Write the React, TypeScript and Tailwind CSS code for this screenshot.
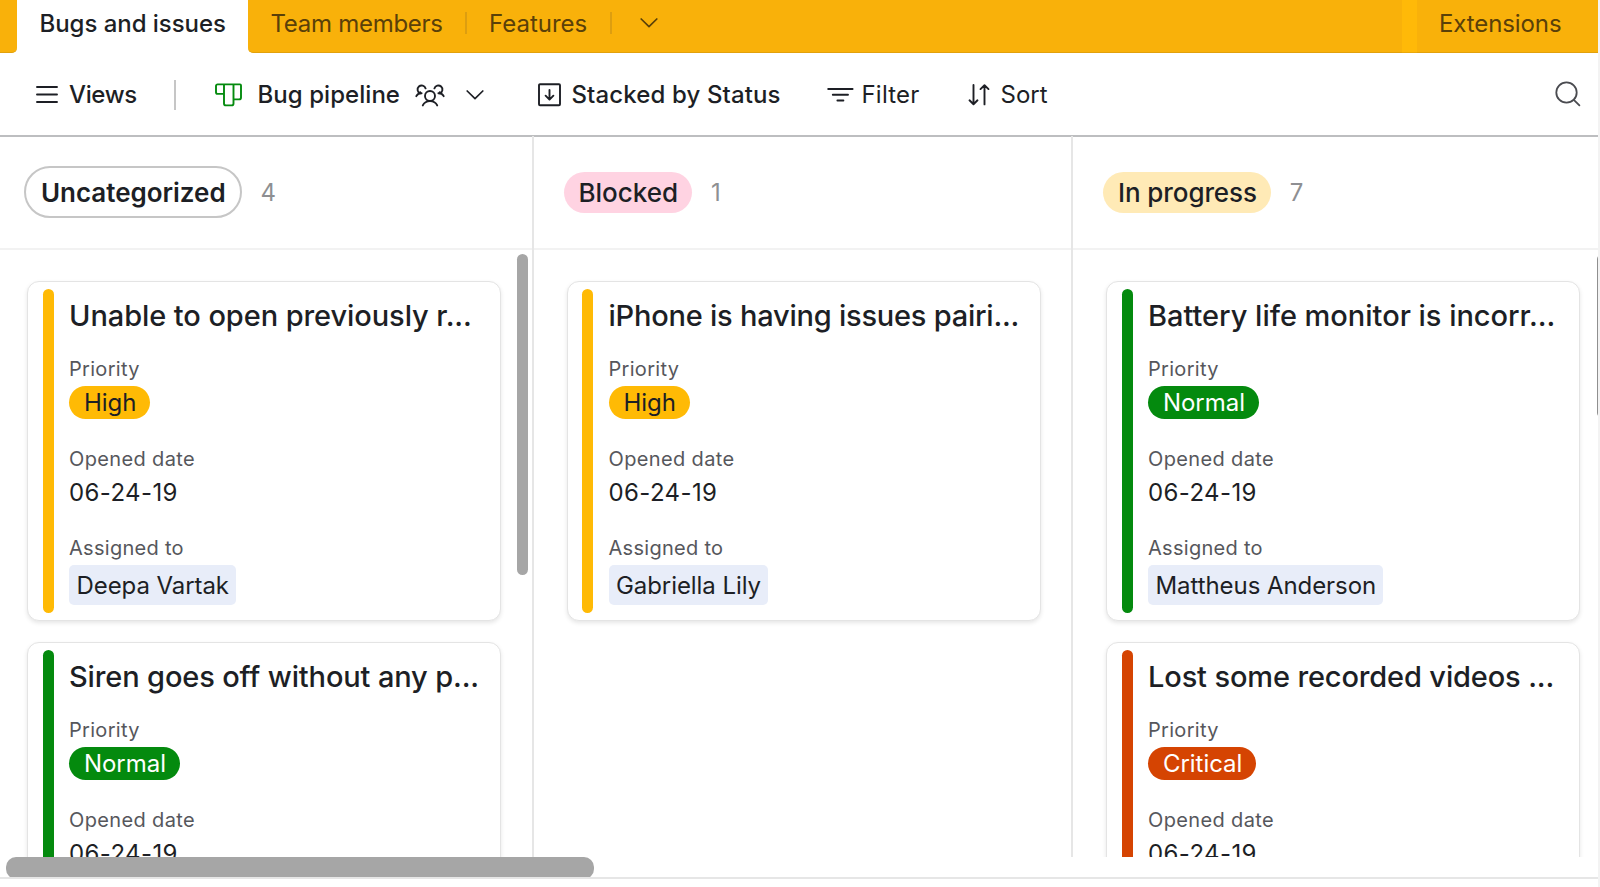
import React from "react";

type Bug = {
  title: string;
  titleTracking: string;
  priority: "High" | "Normal" | "Critical";
  opened: string;
  assignee: string;
};

type Stack = {
  name: string;
  count: number;
  pill: string;
  column: string;
  bugs: Bug[];
};

const PRIORITY = {
  High: { pill: "bg-[#ffba05] text-[#1d1f25]", bar: "bg-[#ffba05]" },
  Normal: { pill: "bg-[#048a0e] text-white", bar: "bg-[#048a0e]" },
  Critical: { pill: "bg-[#d54402] text-white", bar: "bg-[#d54402]" },
};

const STACKS: Stack[] = [
  {
    name: "Uncategorized",
    count: 4,
    pill: "h-[52px] border-2 border-[#c6c6c6] pr-[14px] pl-[15px] font-semibold tracking-[-0.03px]",
    column: "w-[534px] pl-[27px]",
    bugs: [
      { title: "Unable to open previously r...", titleTracking: "tracking-[-0.08px]", priority: "High", opened: "06-24-19", assignee: "Deepa Vartak" },
      { title: "Siren goes off without any p...", titleTracking: "tracking-[-0.14px]", priority: "Normal", opened: "06-24-19", assignee: "Deepa Vartak" },
    ],
  },
  {
    name: "Blocked",
    count: 1,
    pill: "h-[41px] bg-[#ffd3e2] pr-[14px] pl-[15px] font-medium tracking-[-0.03px]",
    column: "w-[539px] pl-[32.5px]",
    bugs: [
      { title: "iPhone is having issues pairi...", titleTracking: "tracking-[-0.23px]", priority: "High", opened: "06-24-19", assignee: "Gabriella Lily" },
    ],
  },
  {
    name: "In progress",
    count: 7,
    pill: "h-[41px] bg-[#ffeab6] pl-[15px] pr-[14px] font-medium tracking-[-0.1px]",
    column: "w-[525px] pl-[33px]",
    bugs: [
      { title: "Battery life monitor is incorr...", titleTracking: "tracking-[-0.02px]", priority: "Normal", opened: "06-24-19", assignee: "Mattheus Anderson" },
      { title: "Lost some recorded videos ...", titleTracking: "tracking-[-0.14px]", priority: "Critical", opened: "06-24-19", assignee: "Mattheus Anderson" },
    ],
  },
];

function ChevronIcon({ className }: { className: string }) {
  return (
    <svg className={className} viewBox="0 0 18 12" fill="none" stroke="currentColor" strokeWidth="1.7" strokeLinecap="round" strokeLinejoin="round">
      <path d="M1.2 2 9 9.600 16.800 2" />
    </svg>
  );
}

function MenuIcon() {
  return (
    <svg className="h-6 w-[22px] shrink-0" viewBox="0 0 22 24" fill="none" stroke="currentColor" strokeWidth="1.9" strokeLinecap="round">
      <path d="M1 4h20M1 11.500h20M1 19h20" />
    </svg>
  );
}

function KanbanIcon() {
  return (
    <svg className="h-6 w-[27px] shrink-0 text-[#048a0e]" viewBox="0 0 27 24" fill="none" stroke="currentColor" strokeWidth="1.9" strokeLinejoin="round">
      <path d="M9 1.400H2.600A1.600 1.600 0 0 0 1 3v6.300a1.600 1.600 0 0 0 1.600 1.600H9M9 1.400v19a2 2 0 0 0 2 2h5.500a2 2 0 0 0 2-2v-19M9 1.400h16a1 1 0 0 1 1 1v12a2 2 0 0 1-2 2h-5.500" />
    </svg>
  );
}

function PeopleIcon() {
  return (
    <svg className="h-6 w-[30px] shrink-0" viewBox="0 0 30 24" fill="none" stroke="currentColor" strokeWidth="1.900" strokeLinecap="round" strokeLinejoin="round">
      <circle cx="15" cy="13" r="5" />
      <path d="M7.800 22.400C9 19.800 11.800 18.100 15 18.100s6 1.700 7.200 4.300" />
      <path d="M10.600 5.400a4.100 4.100 0 1 0-5.400 5M6.600 10.300c-2.500 0-4.400 1.100-5.300 2.900M5.200 9.200v1.300" />
      <path d="M19.400 5.400a4.100 4.100 0 1 1 5.400 5M23.400 10.300c2.500 0 4.400 1.100 5.300 2.900M24.800 9.200v1.300" />
    </svg>
  );
}

function StackIcon() {
  return (
    <svg className="h-6 w-[23px] shrink-0" viewBox="0 0 23 24" fill="none" stroke="currentColor" strokeWidth="1.900" strokeLinecap="round" strokeLinejoin="round">
      <rect x="1" y="1.200" width="21" height="21" rx="1" />
      <path d="M11.500 7v9.400M7.600 12.700l3.900 3.900 3.900-3.900" />
    </svg>
  );
}

function FilterIcon() {
  return (
    <svg className="h-6 w-[27px] shrink-0" viewBox="0 0 27 24" fill="none" stroke="currentColor" strokeWidth="1.900" strokeLinecap="round">
      <path d="M1.200 6h24.400M5.800 11.800h15.200M10.400 17.500h6" />
    </svg>
  );
}

function SortIcon() {
  return (
    <svg className="h-6 w-[22px] shrink-0" viewBox="0 0 22 24" fill="none" stroke="currentColor" strokeWidth="1.900" strokeLinecap="round" strokeLinejoin="round">
      <path d="M5.500 2v19M1.500 17.300l4 3.900 4-3.900M16.500 21.400V2.200M12.500 6.100l4-3.900 4 3.900" />
    </svg>
  );
}

function SearchIcon() {
  return (
    <svg className="h-[26px] w-[26px] shrink-0 text-[#4a4b50]" viewBox="0 0 26 26" fill="none" stroke="currentColor" strokeWidth="1.800" strokeLinecap="round">
      <circle cx="11.500" cy="11.500" r="10.200" />
      <path d="m18.800 18.900 5.600 5.500" />
    </svg>
  );
}

function TabBar() {
  return (
    <nav className="flex h-[53px] shrink-0 bg-white text-2xl leading-[48px] text-[#5a4009]">
      <div className="w-[16.5px] rounded-br-[5px] border-b-[1.5px] border-[#e2a10c] bg-[#f9b10a]" />
      <div className="w-[231.5px] pl-[23px] font-medium tracking-[-0.04px] text-[#1d1f25]">Bugs and issues</div>
      <div className="flex w-[1154px] rounded-bl-[5px] border-b-[1.5px] border-[#e2a10c] bg-[#f9b10a]">
        <div className="w-[217px] pl-[22.5px] tracking-[-0.28px]">Team members</div>
        <div className="mt-3 h-[22px] w-[1.5px] bg-[#dd9e10]" />
        <div className="w-[143.5px] pl-[22.5px]">Features</div>
        <div className="mt-3 h-[22px] w-[1.5px] bg-[#dd9e10]" />
        <ChevronIcon className="mt-[17px] ml-[28px] h-3 w-[18px]" />
      </div>
      <div className="w-[15px] border-b-[1.5px] border-[#e9a80c] bg-[#ffb908]" />
      <div className="w-[181px] border-b-[1.5px] border-[#e2a10c] bg-[#f9b10a] pl-[22px] tracking-[-0.1px]">Extensions</div>
    </nav>
  );
}

function Toolbar() {
  return (
    <div className="-mb-[0.5px] flex h-[83.5px] shrink-0 items-center border-b-2 border-[#bdbec0] pt-[1.5px] pl-[35.5px] text-2xl whitespace-nowrap">
      <MenuIcon />
      <span className="ml-[11.5px] w-[105px] font-medium tracking-[-0.35px]">Views</span>
      <span className="h-[30px] w-[2px] bg-[#c6c6c6]" />
      <span className="ml-[38.5px]"><KanbanIcon /></span>
      <span className="ml-4 w-[157.5px] font-medium tracking-[0.05px]">Bug pipeline</span>
      <PeopleIcon />
      <ChevronIcon className="ml-[20.5px] h-3 w-[18px] shrink-0" />
      <span className="ml-[54px]"><StackIcon /></span>
      <span className="ml-[11px] w-[255px] font-medium tracking-[0.12px]">Stacked by Status</span>
      <FilterIcon />
      <span className="ml-2 w-[106px] tracking-[0.2px]">Filter</span>
      <SortIcon />
      <span className="ml-[11px]">Sort</span>
      <span className="mr-[17px] ml-auto pb-px"><SearchIcon /></span>
    </div>
  );
}

function Card({ bug }: { bug: Bug }) {
  const color = PRIORITY[bug.priority];
  return (
    <article className="flex h-[340px] w-[474px] shrink-0 rounded-[12px] border border-[#e4e4e4] bg-white shadow-[0_2px_4px_rgba(0,0,0,0.1)]">
      <div className={`mt-[7px] ml-[14.5px] h-[324px] w-[11px] shrink-0 rounded-full ${color.bar}`} />
      <div className="ml-[15.5px] flex flex-col items-start whitespace-nowrap">
        <h3 className={`mt-[15.5px] text-[29px] leading-9 font-medium ${bug.titleTracking}`}>{bug.title}</h3>
        <div className="mt-[23.5px] text-xl leading-6 tracking-[0.3px] text-[#56575c]">Priority</div>
        <div className={`mt-[4.5px] flex h-[33.5px] items-center rounded-full pt-[1.5px] pr-[14px] pl-[15px] text-2xl tracking-[-0.05px] ${color.pill}`}>{bug.priority}</div>
        <div className="mt-[27.5px] text-xl leading-6 tracking-[0.36px] text-[#56575c]">Opened date</div>
        <div className="mt-[6.500px] text-2xl leading-8 tracking-[0.4px]">{bug.opened}</div>
        <div className="mt-[27px] text-xl leading-6 tracking-[0.28px] text-[#56575c]">Assigned to</div>
        <div className="mt-[4.500px] flex h-[40.500px] items-center rounded-[5px] bg-[#e8edf9] pt-[2.500px] pr-[7px] pl-[7.5px] text-2xl tracking-[-0.07px]">{bug.assignee}</div>
      </div>
    </article>
  );
}

export default function App() {
  return (
    <div className="flex h-[887px] w-[1600px] overflow-hidden bg-[#f3f3f3] font-['Inter','Liberation_Sans',sans-serif] text-[#1d1f25]">
      <main className="flex w-[1598px] flex-col bg-white">
        <TabBar />
        <Toolbar />
        <div className="flex h-[743px] shrink-0 overflow-hidden border-b-2 border-[#e6e6e6] relative">
          {STACKS.map((stack, i) => (
            <section key={stack.name} className={`relative flex h-[721px] shrink-0 flex-col overflow-hidden ${i < 2 ? "border-r-2 border-[#e6e6e6]" : ""} ${stack.column}`}>
              <header className="flex h-[112px] shrink-0 items-center">
                <div className={`-ml-[3px] flex items-center rounded-full text-[26px] ${stack.pill}`}>{stack.name}</div>
                <span className="ml-[19px] pt-[2px] text-2xl text-[#8e8f92]">{stack.count}</span>
              </header>
              <div className="-ml-[33px] h-[2px] shrink-0 bg-[#f2f2f2]" />
              <div className="mt-[31px] flex flex-col gap-[21px]">
                {stack.bugs.map((bug) => (
                  <Card key={bug.title} bug={bug} />
                ))}
              </div>
            </section>
          ))}
          <div className="absolute top-[117.5px] left-[517px] h-[321px] w-[11px] rounded-full bg-[#a6a6a6]" />
          <div className="absolute top-[118px] left-[1596.5px] h-[164px] w-[11px] rounded-full bg-[#8f8f8f]" />
          <div className="absolute top-[720.5px] left-[5.5px] h-[22px] w-[588px] rounded-[10px] bg-[#a6a6a6]" />
        </div>
      </main>
    </div>
  );
}
